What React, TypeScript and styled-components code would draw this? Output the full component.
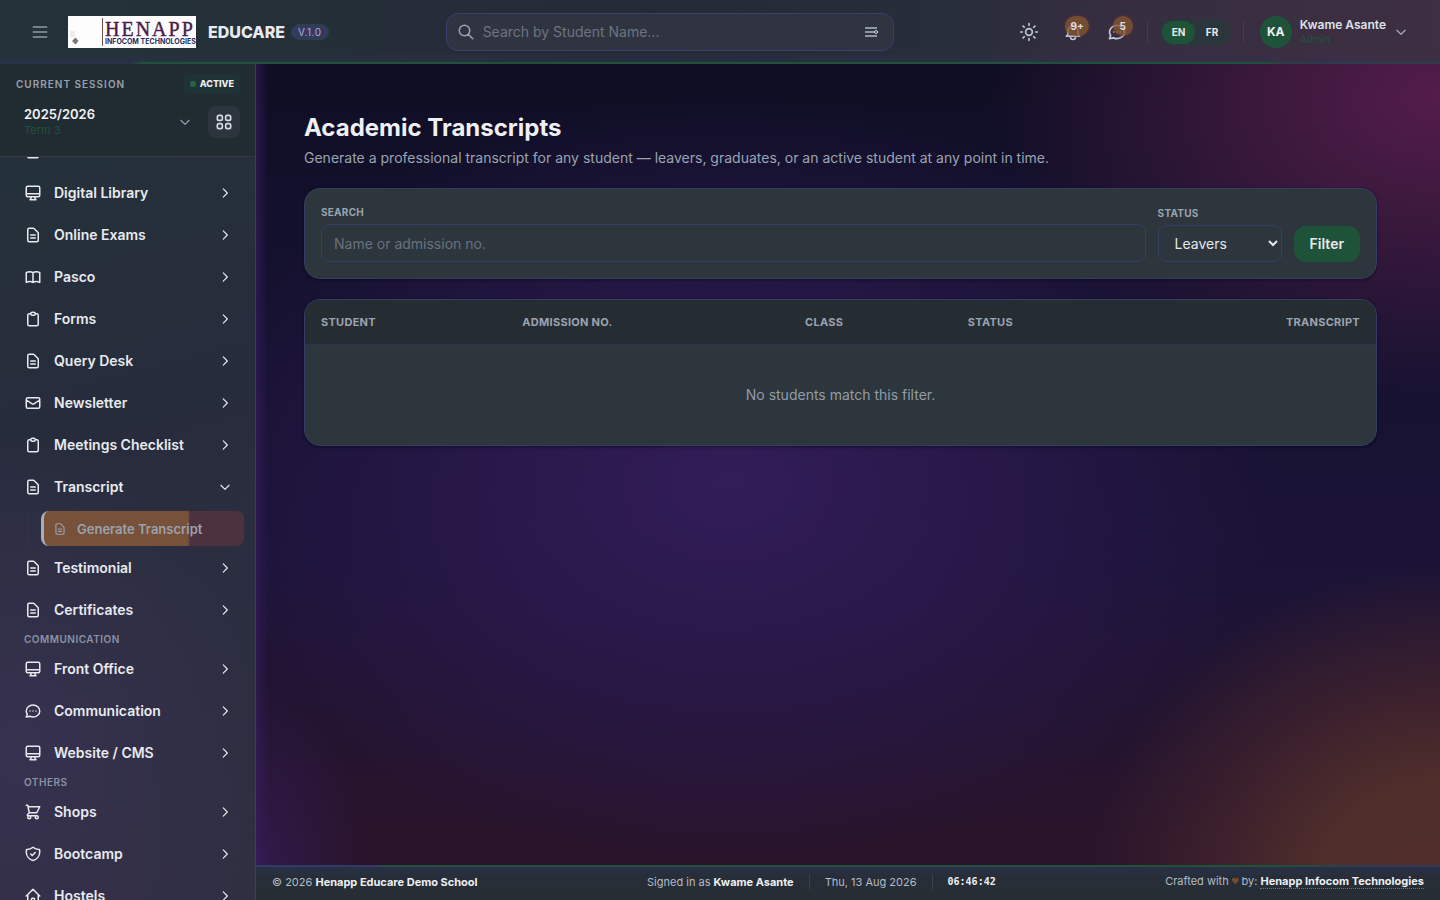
import React, { useLayoutEffect, useRef } from "react";
import styled, { createGlobalStyle, css } from "styled-components";

const GlobalStyle = createGlobalStyle`
  *, *::before, *::after { box-sizing: border-box; }
  body {
    margin: 0;
    background: #110e26;
    color: #e8eaef;
    font-family: Inter, "Liberation Sans", sans-serif;
    font-size: 14px;
    line-height: 20px;
    -webkit-font-smoothing: antialiased;
  }
  button, input, select { font: inherit; color: inherit; }
  button { border: 0; padding: 0; background: none; cursor: pointer; }
  a { color: inherit; text-decoration: none; }
`;

const paths = {
  menu: "M4 6h16M4 12h16M4 18h16",
  search: "M21 21l-6-6m2-5a7 7 0 11-14 0 7 7 0 0114 0z",
  sun: "M12 2v2M12 20v2M4.930 4.930l1.410 1.410M17.660 17.660l1.410 1.410M2 12h2M20 12h2M6.340 17.660l-1.410 1.410M19.070 4.930l-1.410 1.410M16 12a4 4 0 11-8 0 4 4 0 018 0z",
  bell: "M15 17h5l-1.405-1.405A2.032 2.032 0 0118 14.158V11a6.002 6.002 0 00-4-5.659V5a2 2 0 10-4 0v.341C7.67 6.165 6 8.388 6 11v3.159c0 .538-.214 1.055-.595 1.436L4 17h5m6 0v1a3 3 0 11-6 0v-1m6 0H9",
  chat: "M8 12h.01M12 12h.01M16 12h.01M21 12c0 4.418-4.03 8-9 8a9.863 9.863 0 01-4.255-.949L3 20l1.395-3.72C3.512 15.042 3 13.574 3 12c0-4.418 4.03-8 9-8s9 3.582 9 8z",
  down: "M19 9l-7 7-7-7",
  right: "M9 5l7 7-7 7",
  grid: "M4 6a2 2 0 012-2h2a2 2 0 012 2v2a2 2 0 01-2 2H6a2 2 0 01-2-2V6zM14 6a2 2 0 012-2h2a2 2 0 012 2v2a2 2 0 01-2 2h-2a2 2 0 01-2-2V6zM4 16a2 2 0 012-2h2a2 2 0 012 2v2a2 2 0 01-2 2H6a2 2 0 01-2-2v-2zM14 16a2 2 0 012-2h2a2 2 0 012 2v2a2 2 0 01-2 2h-2a2 2 0 01-2-2v-2z",
  desktop: "M9.75 17L9 20l-1 1h8l-1-1-.75-3M3 13h18M5 17h14a2 2 0 002-2V5a2 2 0 00-2-2H5a2 2 0 00-2 2v10a2 2 0 002 2z",
  document: "M9 12h6m-6 4h6m2 5H7a2 2 0 01-2-2V5a2 2 0 012-2h5.586a1 1 0 01.707.293l5.414 5.414a1 1 0 01.293.707V19a2 2 0 01-2 2z",
  book: "M12 6.253v13m0-13C10.832 5.477 9.246 5 7.5 5S4.168 5.477 3 6.253v13C4.168 18.477 5.754 18 7.5 18s3.332.477 4.5 1.253m0-13C13.168 5.477 14.754 5 16.5 5c1.747 0 3.332.477 4.5 1.253v13C19.832 18.477 18.247 18 16.5 18c-1.746 0-3.332.477-4.5 1.253",
  clipboard: "M9 5H7a2 2 0 00-2 2v12a2 2 0 002 2h10a2 2 0 002-2V7a2 2 0 00-2-2h-2M9 5a2 2 0 002 2h2a2 2 0 002-2M9 5a2 2 0 012-2h2a2 2 0 012 2",
  mail: "M3 8l7.89 5.26a2 2 0 002.22 0L21 8M5 19h14a2 2 0 002-2V7a2 2 0 00-2-2H5a2 2 0 00-2 2v10a2 2 0 002 2z",
  cart: "M3 3h2l.4 2M7 13h10l4-8H5.4M7 13L5.4 5M7 13l-2.293 2.293c-.63.63-.184 1.707.707 1.707H17m0 0a2 2 0 100 4 2 2 0 000-4zm-8 2a2 2 0 11-4 0 2 2 0 014 0z",
  shield: "M9 12l2 2 4-4m5.618-4.016A11.955 11.955 0 0112 2.944a11.955 11.955 0 01-8.618 3.04A12.02 12.02 0 003 9c0 5.591 3.824 10.29 9 11.622 5.176-1.332 9-6.03 9-11.622 0-1.042-.133-2.052-.382-3.016z",
  home: "M3 12l2-2m0 0l7-7 7 7M5 10v10a1 1 0 001 1h3m10-11l2 2m-2-2v10a1 1 0 01-1 1h-3m-6 0a1 1 0 001-1v-4a1 1 0 011-1h2a1 1 0 011 1v4a1 1 0 001 1m-6 0h6",
};
type IconName = keyof typeof paths;

const Glyph = styled.svg`
  flex: none;
  display: block;
  fill: none;
  stroke: currentColor;
  stroke-linecap: round;
  stroke-linejoin: round;
`;
const Icon = ({ name, size = 18, weight = 2 }: { name: IconName; size?: number; weight?: number }) => (
  <Glyph width={size} height={size} viewBox="0 0 24 24" strokeWidth={weight} aria-hidden="true">
    <path d={paths[name]} />
  </Glyph>
);

const Shell = styled.div`
  height: 100vh;
  display: grid;
  grid-template: auto minmax(0, 1fr) / 256px minmax(0, 1fr);
`;

const Header = styled.header`
  grid-column: 1 / -1;
  height: 64px;
  padding: 0 24px;
  display: flex;
  align-items: center;
  justify-content: space-between;
  gap: 24px;
  background:
    linear-gradient(90deg, transparent 9%, #1e5339 10%, #1e5339 88%, #333a47 89%) bottom / 100% 2px no-repeat,
    linear-gradient(180deg, transparent 82%, rgba(48, 50, 86, 0.5) 100%),
    linear-gradient(90deg, #233339 0%, #252f38 20%, #242b37 45%, #272d39 66%, #352d40 76%, #3e2f42 100%);
`;
const HeaderGroup = styled.div<{ $gap: number }>`
  display: flex;
  align-items: center;
  gap: ${(p) => p.$gap}px;
`;
const IconButton = styled.button<{ $size: number; $muted?: boolean }>`
  position: relative;
  width: ${(p) => p.$size}px;
  height: ${(p) => p.$size}px;
  display: grid;
  place-items: center;
  color: ${(p) => (p.$muted ? "#9099a8" : "#c3cad6")};
`;
const CountBadge = styled.span`
  position: absolute;
  top: 2px;
  right: 2px;
  min-width: 20px;
  height: 20px;
  padding: 0 5px;
  border-radius: 10px;
  background: rgba(134, 84, 46, 0.78);
  box-shadow: 0 0 4px rgba(120, 50, 60, 0.6);
  color: #dcdee3;
  font-size: 10px;
  line-height: 20px;
  font-weight: 700;
`;
const LogoArt = styled.svg`
  display: block;
  flex: none;
`;
const Brand = styled.strong`
  font-size: 16px;
  line-height: 24px;
  font-weight: 800;
`;
const Version = styled.span`
  height: 16px;
  padding: 0 6px;
  border-radius: 8px;
  border: 1px solid #25463f;
  background: #353961;
  color: #a9b2c4;
  font-size: 10px;
  line-height: 15px;
  letter-spacing: 0.5px;
`;
const BrandRow = styled.div`
  display: flex;
  align-items: center;
  gap: 6px;
`;
const SearchBox = styled.form`
  flex: 0 1 448px;
  height: 38px;
  padding: 0 10px;
  display: flex;
  align-items: center;
  gap: 8px;
  border: 1px solid #3a3f72;
  border-radius: 12px;
  background: #303441;
  color: #9aa3b2;
`;
const SearchInput = styled.input`
  flex: 1;
  min-width: 0;
  border: 0;
  outline: 0;
  padding: 0;
  background: none;
  &::placeholder { color: #6d7383; opacity: 1; }
`;
const Divider = styled.span<{ $tall?: boolean }>`
  width: 1px;
  height: ${(p) => (p.$tall ? 20 : 14)}px;
  background: ${(p) => (p.$tall ? "#383d66" : "#3d4450")};
`;
const LanguageGroup = styled.div`
  display: flex;
  align-items: center;
  gap: 12px;
  padding-left: 4px;
`;
const LanguageSwitch = styled.div`
  width: 71px;
  display: flex;
  padding: 2px;
  border-radius: 14px;
  background: #2b353c;
`;
const LanguageButton = styled.button<{ $on?: boolean }>`
  flex: 1;
  height: 23px;
  border-radius: 12px;
  background: ${(p) => (p.$on ? "#1e5339" : "transparent")};
  color: #e6e9ee;
  font-size: 10px;
  line-height: 23px;
  font-weight: 700;
`;
const Profile = styled.button`
  padding: 0 8px;
  display: flex;
  align-items: center;
  gap: 8px;
  text-align: left;
  color: #aab1be;
`;
const Avatar = styled.span`
  width: 32px;
  height: 32px;
  border-radius: 50%;
  background: #1e5339;
  color: #eef0f4;
  font-size: 12px;
  line-height: 32px;
  font-weight: 700;
  text-align: center;
`;
const ProfileText = styled.span`
  display: flex;
  flex-direction: column;
  color: #dfe2e9;
  font-size: 12px;
  line-height: 14px;
  font-weight: 600;
`;
const GreenNote = styled.span`
  color: #1e5339;
  font-size: 10px;
  line-height: 14px;
  font-weight: 400;
`;

const Sidebar = styled.aside`
  min-height: 0;
  display: flex;
  flex-direction: column;
  border-right: 1px solid #383c6c;
  background:
    radial-gradient(ellipse 240px 320px at 20px 690px, #37314f, transparent),
    linear-gradient(165deg, #24323a 0%, #25303a 18%, #272c3c 42%, #2b2e40 65%, #302f42 100%);
`;
const Session = styled.section`
  flex: none;
  height: 93px;
  padding: 10px 15px 0 16px;
  border-bottom: 1px solid #3b3745;
  background: #212b32;
`;
const SessionRow = styled.div<{ $indent?: boolean }>`
  display: flex;
  align-items: center;
  justify-content: space-between;
  ${(p) => p.$indent && css`
    margin-top: 12px;
    padding-left: 8px;
  `}
`;
const SessionLabel = styled.span`
  color: #98a1ae;
  font-size: 10px;
  line-height: 20px;
  font-weight: 600;
  letter-spacing: 1px;
`;
const ActiveTag = styled.span`
  display: flex;
  align-items: center;
  gap: 4px;
  height: 18px;
  padding: 0 6px;
  border-radius: 4px;
  background: #1f3236;
  color: #eef0f4;
  font-size: 9px;
  font-weight: 800;
  &::before {
    content: "";
    width: 6px;
    height: 6px;
    border-radius: 2px;
    background: #2a6047;
  }
`;
const TermButton = styled.button`
  flex: 1;
  display: flex;
  align-items: center;
  justify-content: space-between;
  padding-right: 16px;
  color: #98a1ae;
  text-align: left;
`;
const TermText = styled.span`
  display: flex;
  flex-direction: column;
  color: #f0f2f5;
  font-size: 13px;
  line-height: 16px;
  font-weight: 600;
`;
const TermNote = styled(GreenNote)`
  font-size: 11px;
  line-height: 16px;
`;
const GridButton = styled.button`
  width: 32px;
  height: 32px;
  display: grid;
  place-items: center;
  border-radius: 8px;
  background: #2c353d;
  color: #d6dae1;
`;

const Nav = styled.nav`
  flex: 1;
  min-height: 0;
  overflow-y: auto;
  padding-bottom: 16px;
  scrollbar-width: none;
`;
const NavItem = styled.button`
  width: 100%;
  height: 42px;
  padding: 0 23px 0 24px;
  display: flex;
  align-items: center;
  gap: 12px;
  color: #e8eaef;
  font-weight: 600;
  text-align: left;
`;
const NavText = styled.span`
  flex: 1;
`;
const NavHeading = styled.h2`
  margin: 0;
  padding-left: 24px;
  color: #8a93a3;
  font-size: 10px;
  line-height: 17px;
  font-weight: 600;
  letter-spacing: 0.5px;
`;
const SubNav = styled.div`
  margin: 3px 11px 1px 28px;
  padding-left: 12px;
  border-left: 1px solid #35354a;
`;
const SubLink = styled.a`
  height: 35px;
  padding-left: 9px;
  display: flex;
  align-items: center;
  gap: 10px;
  border-left: 3px solid #a9adb8;
  border-radius: 8px;
  background: linear-gradient(90deg, #77513a 72%, #4c323e 73%);
  color: #9ba1ae;
  font-size: 13px;
  font-weight: 600;
`;

const Content = styled.div`
  min-width: 0;
  display: flex;
  flex-direction: column;
  background:
    linear-gradient(90deg, rgba(54, 29, 96, 0.6) 0, transparent 12px),
    radial-gradient(ellipse 30% 40% at 100% 100%, #532f2b 0%, #4f2e2b 35%, rgba(70, 38, 44, 0.7) 62%, transparent 100%),
    radial-gradient(ellipse 38% 36% at 100% 4%, #541c4b 0%, rgba(70, 27, 66, 0.85) 35%, transparent 100%),
    radial-gradient(ellipse 9% 22% at 0% 96%, rgba(54, 30, 98, 0.6), transparent),
    radial-gradient(ellipse 46% 46% at 40% 50%, #331d58 0%, rgba(46, 26, 82, 0.7) 45%, transparent 100%),
    linear-gradient(180deg, #0f0e24 0%, #14112e 25%, #1b1337 60%, #29142b 92%, #29142b 100%);
`;
const Main = styled.main`
  flex: 1;
  min-height: 0;
  padding: 48px 63px 24px 48px;
`;
const Title = styled.h1`
  margin: 0;
  color: #eef0f4;
  font-size: 24px;
  line-height: 32px;
  font-weight: 700;
`;
const Subtitle = styled.p`
  margin: 4px 0 20px;
  color: #9ba3b1;
`;
const cardStyle = css`
  border: 1px solid #343d63;
  border-radius: 16px;
  background: #2c363c;
  box-shadow: 0 1px 3px rgba(8, 6, 20, 0.6);
`;
const FilterCard = styled.form`
  ${cardStyle}
  margin-bottom: 20px;
  padding: 16px;
  display: flex;
  align-items: flex-end;
  gap: 12px;
`;
const Field = styled.label<{ $grow?: boolean }>`
  ${(p) => p.$grow && "flex: 1;"}
  display: flex;
  flex-direction: column;
  gap: 4px;
  color: #9ba3b1;
  font-size: 10px;
  line-height: 15px;
  font-weight: 700;
  letter-spacing: 0.025em;
`;
const controlStyle = css`
  border: 1px solid #363d68;
  border-radius: 8px;
  background: #2c363c;
  outline: 0;
  font-size: 14px;
  font-weight: 400;
  letter-spacing: normal;
  color: #e4e7ec;
`;
const TextInput = styled.input`
  ${controlStyle}
  width: 100%;
  height: 38px;
  padding: 0 12px;
  &::placeholder { color: #6a7180; opacity: 1; }
`;
const Select = styled.select`
  ${controlStyle}
  width: 124px;
  height: 37px;
  padding: 0 0 0 12px;
`;
const FilterButton = styled.button`
  height: 36px;
  padding: 0 16px;
  border-radius: 12px;
  background: #1e5339;
  color: #e8eaef;
  font-weight: 600;
`;
const TableCard = styled.div`
  ${cardStyle}
  overflow: hidden;
`;
const Table = styled.table`
  width: 100%;
  border-collapse: collapse;
  table-layout: fixed;
`;
const Th = styled.th<{ $width?: string; $end?: boolean }>`
  width: ${(p) => p.$width ?? "auto"};
  height: 44px;
  padding: 0 16px;
  border-bottom: 1px solid #2f3355;
  background: #262d32;
  color: #9ba3b1;
  font-size: 11px;
  line-height: 16px;
  font-weight: 700;
  letter-spacing: 0.025em;
  text-align: ${(p) => (p.$end ? "right" : "left")};
`;
const EmptyCell = styled.td`
  padding: 40px 16px;
  color: #939ba9;
  text-align: center;
`;

const Footer = styled.footer`
  height: 35px;
  padding: 0 16px 2px;
  display: flex;
  align-items: center;
  justify-content: space-between;
  background:
    linear-gradient(90deg, #343a66 10%, #1e5339 11%, #1e5339 86%, #343a55 94%) top / 100% 2px no-repeat,
    linear-gradient(180deg, #29304a 0%, #272e38 35%, #262d33 100%);
  color: #b4bbc6;
  font-size: 11px;
  line-height: 16px;
`;
const FooterGroup = styled.div`
  display: flex;
  align-items: center;
  gap: 15px;
`;
const Strong = styled.strong`
  color: #eef0f4;
  font-weight: 700;
`;
const Clock = styled.time`
  color: #eef0f4;
  font-family: "DejaVu Sans Mono", "Liberation Mono", monospace;
  font-size: 10px;
  font-weight: 700;
`;
const Heart = styled.span`
  color: #7c4c32;
  font-family: "DejaVu Sans Mono", monospace;
  font-size: 11px;
`;
const CreditLink = styled.a`
  color: #eef0f4;
  font-weight: 700;
  border-bottom: 1px dotted #6b7280;
`;

const Logo = () => (
  <LogoArt width="128" height="32" viewBox="0 0 128 32" role="img" aria-label="Henapp Infocom Technologies">
    <rect width="128" height="32" fill="#fdfdfe" />
    <path d="M2 15h5v6H2z" fill="#ececee" />
    <path d="M7.500 21.500l3 3.500-3 3.500-3.500-3.500z" fill="#77777c" />
    <path d="M34.500 2v28" stroke="#7b5148" />
    <text x="37" y="20" fill="#4a1d4c" fontFamily="Liberation Serif, serif" fontSize="20" fontWeight="400" letterSpacing="2" stroke="#4a1d4c" strokeWidth="0.400">HENAPP</text>
    <text x="37" y="28" fill="#2c2a5c" fontFamily="Inter, sans-serif" fontSize="7" fontWeight="700">INFOCOM TECHNOLOGIES</text>
  </LogoArt>
);

const FilterLines = () => (
  <Glyph width="14" height="12" viewBox="0 0 14 12" strokeWidth="2" aria-hidden="true">
    <path d="M0 2h12M0 6h9M0 10h12" strokeLinecap="butt" />
    <circle cx="11" cy="6" r="1.500" stroke="#d4d9e2" strokeWidth="1" fill="#303441" />
  </Glyph>
);

type Entry = { label?: string; icon: IconName; child?: string };
const groups: { heading?: string; items: Entry[] }[] = [
  {
    items: [
      { icon: "document" },
      { label: "Digital Library", icon: "desktop" },
      { label: "Online Exams", icon: "document" },
      { label: "Pasco", icon: "book" },
      { label: "Forms", icon: "clipboard" },
      { label: "Query Desk", icon: "document" },
      { label: "Newsletter", icon: "mail" },
      { label: "Meetings Checklist", icon: "clipboard" },
      { label: "Transcript", icon: "document", child: "Generate Transcript" },
      { label: "Testimonial", icon: "document" },
      { label: "Certificates", icon: "document" },
    ],
  },
  {
    heading: "COMMUNICATION",
    items: [
      { label: "Front Office", icon: "desktop" },
      { label: "Communication", icon: "chat" },
      { label: "Website / CMS", icon: "desktop" },
    ],
  },
  {
    heading: "OTHERS",
    items: [
      { label: "Shops", icon: "cart" },
      { label: "Bootcamp", icon: "shield" },
      { label: "Hostels", icon: "home" },
    ],
  },
];

const SideMenu = () => {
  const ref = useRef<HTMLElement>(null);
  useLayoutEffect(() => {
    if (ref.current) ref.current.scrollTop = 27;
  }, []);
  return (
    <Nav ref={ref} aria-label="Main">
      {groups.map((group, i) => (
        <React.Fragment key={i}>
          {group.heading && <NavHeading>{group.heading}</NavHeading>}
          {group.items.map(({ label, icon, child }, j) => (
            <React.Fragment key={j}>
              <NavItem type="button" aria-expanded={!!child}>
                <Icon name={icon} />
                <NavText>{label}</NavText>
                <Icon name={child ? "down" : "right"} size={14} />
              </NavItem>
              {child && (
                <SubNav>
                  <SubLink href="#generate" aria-current="page">
                    <Icon name="document" size={14} />
                    {child}
                  </SubLink>
                </SubNav>
              )}
            </React.Fragment>
          ))}
        </React.Fragment>
      ))}
    </Nav>
  );
};

export default function App() {
  return (
    <>
      <GlobalStyle />
      <Shell>
        <Header>
          <HeaderGroup $gap={12}>
            <IconButton $size={32} $muted type="button" aria-label="Toggle menu"><Icon name="menu" size={20} /></IconButton>
            <Logo />
            <BrandRow>
              <Brand>EDUCARE</Brand>
              <Version>V.1.0</Version>
            </BrandRow>
          </HeaderGroup>
          <SearchBox role="search">
            <Icon name="search" size={18} />
            <SearchInput type="search" aria-label="Search by student name" placeholder="Search by Student Name..." />
            <IconButton $size={22} $muted type="button" aria-label="Search options"><FilterLines /></IconButton>
          </SearchBox>
          <HeaderGroup $gap={8}>
            <IconButton $size={36} type="button" aria-label="Theme"><Icon name="sun" size={20} /></IconButton>
            <IconButton $size={36} type="button" aria-label="Notifications">
              <Icon name="bell" size={20} /><CountBadge>9+</CountBadge>
            </IconButton>
            <IconButton $size={36} type="button" aria-label="Messages">
              <Icon name="chat" size={20} /><CountBadge>5</CountBadge>
            </IconButton>
            <LanguageGroup>
              <Divider $tall />
              <LanguageSwitch>
                <LanguageButton type="button" $on aria-pressed="true">EN</LanguageButton>
                <LanguageButton type="button" aria-pressed="false">FR</LanguageButton>
              </LanguageSwitch>
              <Divider $tall />
            </LanguageGroup>
            <Profile type="button">
              <Avatar>KA</Avatar>
              <ProfileText>Kwame Asante<GreenNote>Admin</GreenNote></ProfileText>
              <Icon name="down" size={14} />
            </Profile>
          </HeaderGroup>
        </Header>

        <Sidebar>
          <Session>
            <SessionRow>
              <SessionLabel>CURRENT SESSION</SessionLabel>
              <ActiveTag>ACTIVE</ActiveTag>
            </SessionRow>
            <SessionRow $indent>
              <TermButton type="button">
                <TermText>2025/2026<TermNote>Term 3</TermNote></TermText>
                <Icon name="down" size={14} />
              </TermButton>
              <GridButton type="button" aria-label="All modules"><Icon name="grid" size={20} /></GridButton>
            </SessionRow>
          </Session>
          <SideMenu />
        </Sidebar>

        <Content>
          <Main>
            <Title>Academic Transcripts</Title>
            <Subtitle>Generate a professional transcript for any student — leavers, graduates, or an active student at any point in time.</Subtitle>
            <FilterCard>
              <Field $grow>
                SEARCH
                <TextInput type="text" placeholder="Name or admission no." />
              </Field>
              <Field>
                STATUS
                <Select defaultValue="leavers">
                  <option value="leavers">Leavers</option>
                </Select>
              </Field>
              <FilterButton type="button">Filter</FilterButton>
            </FilterCard>
            <TableCard>
              <Table>
                <thead>
                  <tr>
                    <Th $width="18.800%">STUDENT</Th>
                    <Th $width="26.400%">ADMISSION NO.</Th>
                    <Th $width="15.200%">CLASS</Th>
                    <Th>STATUS</Th>
                    <Th $end>TRANSCRIPT</Th>
                  </tr>
                </thead>
                <tbody>
                  <tr><EmptyCell colSpan={5}>No students match this filter.</EmptyCell></tr>
                </tbody>
              </Table>
            </TableCard>
          </Main>
          <Footer>
            <span>© 2026 <Strong>Henapp Educare Demo School</Strong></span>
            <FooterGroup>
              <span>Signed in as <Strong>Kwame Asante</Strong></span>
              <Divider />
              <span>Thu, 13 Aug 2026</span>
              <Divider />
              <Clock>06:46:42</Clock>
            </FooterGroup>
            <span>Crafted with <Heart>♥</Heart> by: <CreditLink href="#henapp">Henapp Infocom Technologies</CreditLink></span>
          </Footer>
        </Content>
      </Shell>
    </>
  );
}
